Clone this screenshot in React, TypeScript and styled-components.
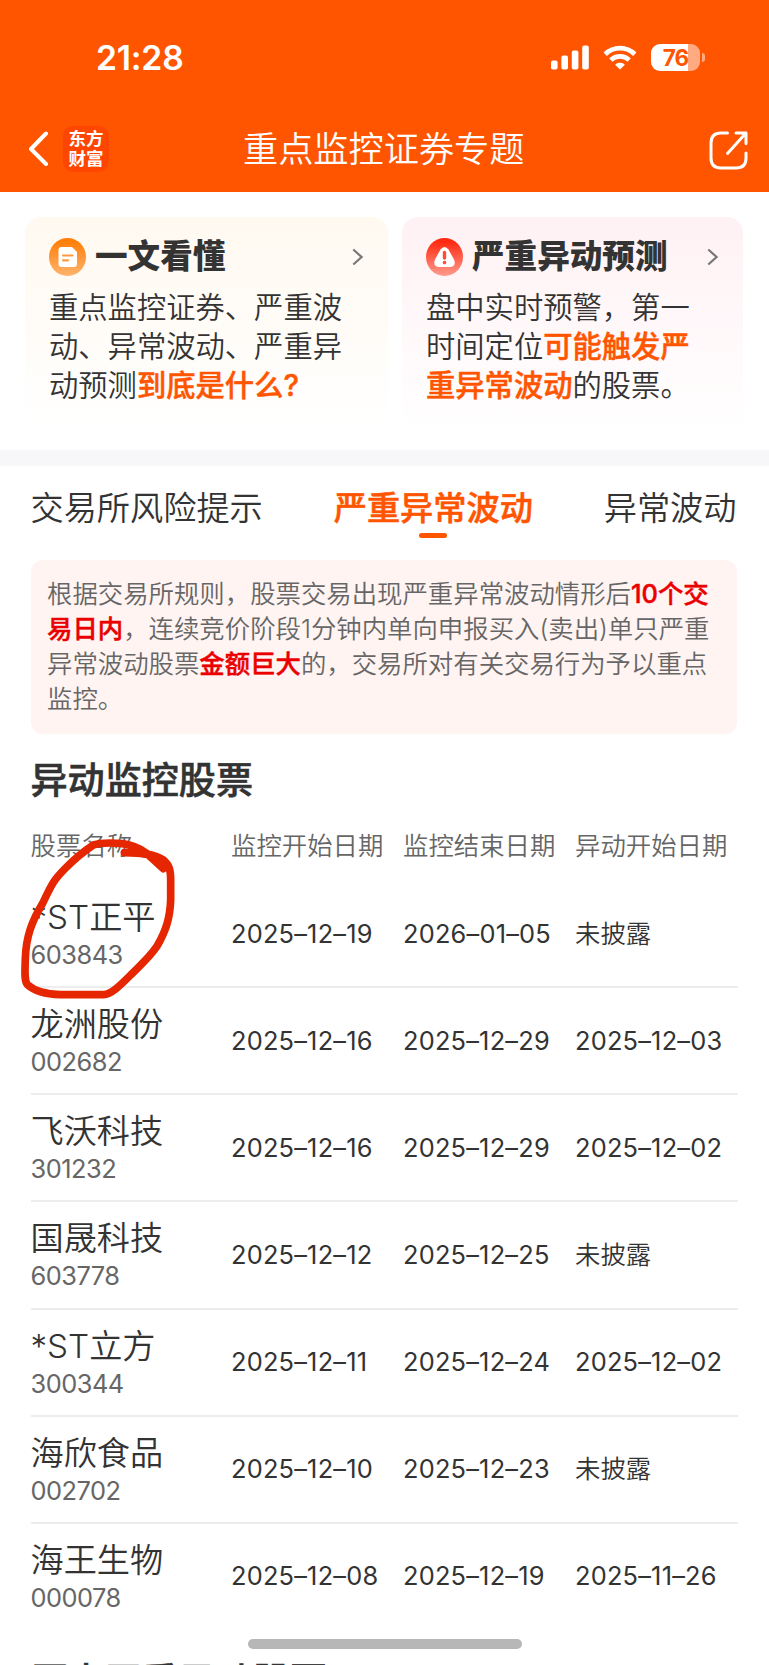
import React from "react";
import styled, { createGlobalStyle } from "styled-components";

const ORANGE = "#ff5500";
const INK = "#333333";
const GREY = "#666666";

const GlobalStyle = createGlobalStyle`
  * { box-sizing: border-box; }
  body {
    margin: 0;
    background: #fff;
    font-family: Inter, "Noto Sans CJK SC", sans-serif;
    font-weight: 350;
    color: ${INK};
  }
`;

const Page = styled.main`
  position: relative;
  width: 769px;
  height: 1665px;
  overflow: hidden;
  background: #fff;
`;

const Header = styled.header`
  height: 192px;
  background: ${ORANGE};
  color: #fff;
`;

const StatusBar = styled.div`
  display: flex;
  align-items: center;
  justify-content: space-between;
  height: 114px;
  padding: 0 64px 0 96px;
`;

const Clock = styled.span`
  padding-top: 1px;
  font-size: 33.7px;
  font-weight: 600;
  letter-spacing: -0.2px;
`;

const StatusIcons = styled.div`
  display: flex;
  align-items: center;
  gap: 14px;
`;

const Battery = styled.div`
  display: flex;
  align-items: center;
  gap: 2px;
`;

const BatteryBody = styled.div`
  width: 49px;
  height: 27px;
  border-radius: 9px;
  background: linear-gradient(90deg, #fff 76%, #ffaa80 76%);
  color: ${ORANGE};
  font-size: 22.5px;
  font-weight: 700;
  line-height: 28px;
  text-align: center;
  letter-spacing: -0.8px;
`;

const BatteryCap = styled.div`
  width: 3px;
  height: 9px;
  border-radius: 0 3px 3px 0;
  background: #ffaa80;
`;

const NavBar = styled.nav`
  display: grid;
  grid-template-columns: 215px auto 1fr;
  align-items: center;
  height: 70px;
  padding: 0 20px 0 28px;
`;

const NavLeft = styled.div`
  display: flex;
  align-items: center;
  gap: 13px;
`;

const Logo = styled.div`
  width: 46px;
  height: 46px;
  padding-top: 3px;
  border-radius: 10px;
  background: #ff4600;
  font-size: 17.5px;
  font-weight: 700;
  line-height: 19.5px;
  text-align: center;
`;

const Title = styled.h1`
  margin: 0;
  font-size: 35.2px;
  font-weight: 350;
  line-height: 48px;
`;

const NavRight = styled.div`
  display: flex;
  justify-content: flex-end;
  padding-top: 4px;
`;

const Cards = styled.section`
  display: flex;
  gap: 14px;
  height: 258px;
  padding: 25px 26px 19px 25px;
`;

const Card = styled.article<{ $tint: string; $width: number }>`
  width: ${(p) => p.$width}px;
  padding: 20px 24.5px 0 24px;
  border-radius: 16px;
  background: linear-gradient(180deg, ${(p) => p.$tint}, #fff);
`;

const CardHead = styled.div`
  display: flex;
  align-items: center;
  height: 40px;
`;

const CardTitle = styled.h2`
  flex: 1;
  margin: -2px 0 0 9px;
  font-size: 32.6px;
  font-weight: 900;
  line-height: 40px;
`;

const CardText = styled.p`
  margin: 11px 0 0;
  font-size: 29.3px;
  line-height: 39.1px;
  white-space: nowrap;
`;

const Accent = styled.strong<{ $color: string }>`
  color: ${(p) => p.$color};
  font-weight: 500;
  -webkit-text-stroke: 0.45px ${(p) => p.$color};
`;

const Band = styled.div`
  height: 16px;
  background: #f7f7f9;
`;

const Tabs = styled.div`
  display: flex;
  justify-content: space-between;
  height: 94px;
  padding: 18px 32.5px 0 30.5px;
`;

const Tab = styled.div<{ $active?: boolean }>`
  display: flex;
  flex-direction: column;
  align-items: center;
  gap: 1px;
  color: ${(p) => (p.$active ? ORANGE : INK)};
  font-size: 33.2px;
  font-weight: ${(p) => (p.$active ? 500 : 350)};
  line-height: 48px;
  -webkit-text-stroke: ${(p) => (p.$active ? `0.5px ${ORANGE}` : "0")};
`;

const TabLine = styled.i`
  width: 28px;
  height: 5px;
  border-radius: 3px;
  background: ${ORANGE};
`;

const Notice = styled.p`
  height: 174px;
  margin: 0 32px 0 31px;
  padding: 15.5px 16px;
  border-radius: 12px;
  background: #fff4f2;
  color: ${GREY};
  font-size: 25.4px;
  line-height: 35.1px;
  white-space: nowrap;
`;

const SectionTitle = styled.h2`
  margin: 20px 0 0 30.5px;
  font-size: 37.1px;
  font-weight: 500;
  line-height: 54px;
  -webkit-text-stroke: 0.6px ${INK};
`;

const Table = styled.section`
  margin: 19px 31px 0 30.5px;
`;

const gridColumns = "200.5px 172px 172px 1fr";

const HeadRow = styled.div`
  display: grid;
  grid-template-columns: ${gridColumns};
  height: 54px;
  color: ${GREY};
  font-size: 25.4px;
  line-height: 37px;
  white-space: nowrap;
`;

const Row = styled.div`
  display: grid;
  grid-template-columns: ${gridColumns};
  align-items: center;
  height: 107.15px;
  border-bottom: 2px solid #ededed;
  font-size: 25.4px;
  white-space: nowrap;
  &:last-child { border-bottom-color: transparent; }
`;

const DateCell = styled.span<{ $numeric: boolean }>`
  height: 36px;
  line-height: 36px;
  font-weight: ${(p) => (p.$numeric ? 400 : 350)};
  letter-spacing: ${(p) => (p.$numeric ? 0.2 : 0)}px;
`;

const StockName = styled.div`
  font-size: 33.2px;
  line-height: 42px;
`;

const StockCode = styled.div`
  color: ${GREY};
  font-size: 25.4px;
  font-weight: 400;
  line-height: 33px;
  letter-spacing: -0.5px;
`;

const NextTitle = styled(SectionTitle)`
  margin-top: 24px;
`;

const HomeBar = styled.div`
  position: absolute;
  left: 248px;
  top: 1639px;
  width: 274px;
  height: 10px;
  border-radius: 5px;
  background: #b7b7b7;
`;

const Scribble = styled.svg`
  position: absolute;
  left: 0;
  top: 740px;
`;

const SignalIcon = () => (
  <svg width="38" height="25" viewBox="0 0 38 25" fill="#fff">
    <rect x="0" y="15.5" width="6.6" height="9" rx="2" />
    <rect x="10.4" y="10.5" width="6.6" height="14" rx="2" />
    <rect x="20.8" y="5.5" width="6.6" height="19" rx="2" />
    <rect x="31.2" y="0.5" width="6.6" height="24" rx="2" />
  </svg>
);

const WifiIcon = () => (
  <svg width="34" height="25" viewBox="0 0 34 25" fill="none" stroke="#fff" strokeWidth="4.8">
    <path d="M2.2 9.2C10.6 1.1 23.4 1.1 31.8 9.2" />
    <path d="M7.8 15C13 10.2 21 10.2 26.2 15" />
    <path d="M12.1 19.7C15 17.2 19 17.2 21.9 19.7L17 24.6Z" fill="#fff" stroke="none" />
  </svg>
);

const BackIcon = () => (
  <svg width="22" height="36" viewBox="0 0 22 36" fill="none" stroke="#fff" strokeWidth="4" strokeLinecap="round" strokeLinejoin="round">
    <path d="M18 2.500L3 18L18 33" />
  </svg>
);

const ShareIcon = () => (
  <svg width="40" height="40" viewBox="0 0 40 40" fill="none" stroke="#fff" strokeWidth="3" strokeLinecap="round" strokeLinejoin="round">
    <path d="M18.5 2H12Q2 2 2 12V27Q2 37 12 37H27Q37 37 37 27V22" />
    <path d="M27 2H37V12.500M36.500 2.500L18.500 22.500" />
  </svg>
);

const ArrowIcon = () => (
  <svg width="12" height="18" viewBox="0 0 12 18" fill="none" stroke="#777" strokeWidth="2.2">
    <path d="M1.300 1.500L9.600 9L1.300 16.500" />
  </svg>
);

const DocIcon = () => (
  <svg width="37" height="38" viewBox="0 0 37 38">
    <defs>
      <linearGradient id="doc" x2="0" y2="1">
        <stop offset="0.1" stopColor="#ff7f0a" />
        <stop offset="1" stopColor="#ffb46e" />
      </linearGradient>
    </defs>
    <ellipse cx="18.5" cy="19" rx="18.5" ry="19" fill="url(#doc)" />
    <path d="M12.500 9H23L28 14V26Q28 29 25 29H12.500Q9.500 29 9.500 26V12Q9.500 9 12.500 9Z" fill="#fff" />
    <path d="M14 17.500H23.500M14 22.300H19" stroke="#ff9a3c" strokeWidth="2.200" strokeLinecap="round" />
  </svg>
);

const AlertIcon = () => (
  <svg width="37" height="38" viewBox="0 0 37 38">
    <defs>
      <linearGradient id="alert" x2="0" y2="1">
        <stop offset="0.1" stopColor="#ff2a12" />
        <stop offset="1" stopColor="#ff9c8e" />
      </linearGradient>
    </defs>
    <ellipse cx="18.5" cy="19" rx="18.5" ry="19" fill="url(#alert)" />
    <path d="M14.500 11.500Q18.500 6.500 22.500 11.500L28 21.500Q30.500 28.500 24.500 29H12.500Q6.500 28.500 9 21.500Z" fill="#fff" />
    <path d="M18.500 14.500V20" stroke="#ff4a35" strokeWidth="3.400" strokeLinecap="round" />
    <circle cx="18.500" cy="24.600" r="1.800" fill="#ff4a35" />
  </svg>
);

const rows = [
  ["*ST正平", "603843", "2025–12–19", "2026–01–05", "未披露"],
  ["龙洲股份", "002682", "2025–12–16", "2025–12–29", "2025–12–03"],
  ["飞沃科技", "301232", "2025–12–16", "2025–12–29", "2025–12–02"],
  ["国晟科技", "603778", "2025–12–12", "2025–12–25", "未披露"],
  ["*ST立方", "300344", "2025–12–11", "2025–12–24", "2025–12–02"],
  ["海欣食品", "002702", "2025–12–10", "2025–12–23", "未披露"],
  ["海王生物", "000078", "2025–12–08", "2025–12–19", "2025–11–26"],
];

export default function App() {
  return (
    <Page>
      <GlobalStyle />
      <Header>
        <StatusBar>
          <Clock>21:28</Clock>
          <StatusIcons>
            <SignalIcon />
            <WifiIcon />
            <Battery>
              <BatteryBody>76</BatteryBody>
              <BatteryCap />
            </Battery>
          </StatusIcons>
        </StatusBar>
        <NavBar>
          <NavLeft>
            <BackIcon />
            <Logo>东方<br />财富</Logo>
          </NavLeft>
          <Title>重点监控证券专题</Title>
          <NavRight><ShareIcon /></NavRight>
        </NavBar>
      </Header>

      <Cards>
        <Card $tint="#fff9f0" $width={363}>
          <CardHead>
            <DocIcon />
            <CardTitle>一文看懂</CardTitle>
            <ArrowIcon />
          </CardHead>
          <CardText>
            重点监控证券、严重波<br />
            动、异常波动、严重异<br />
            动预测<Accent $color={ORANGE}>到底是什么?</Accent>
          </CardText>
        </Card>
        <Card $tint="#fff1f4" $width={341}>
          <CardHead>
            <AlertIcon />
            <CardTitle>严重异动预测</CardTitle>
            <ArrowIcon />
          </CardHead>
          <CardText>
            盘中实时预警，第一<br />
            时间定位<Accent $color={ORANGE}>可能触发严<br />
            重异常波动</Accent>的股票。
          </CardText>
        </Card>
      </Cards>

      <Band />

      <Tabs>
        <Tab>交易所风险提示</Tab>
        <Tab $active>严重异常波动<TabLine /></Tab>
        <Tab>异常波动</Tab>
      </Tabs>

      <Notice>
        根据交易所规则，股票交易出现严重异常波动情形后<Accent $color="#ea0000">10个交<br />
        易日内</Accent>，连续竞价阶段1分钟内单向申报买入(卖出)单只严重<br />
        异常波动股票<Accent $color="#ea0000">金额巨大</Accent>的，交易所对有关交易行为予以重点<br />
        监控。
      </Notice>

      <SectionTitle>异动监控股票</SectionTitle>
      <Table>
        <HeadRow>
          <span>股票名称</span>
          <span>监控开始日期</span>
          <span>监控结束日期</span>
          <span>异动开始日期</span>
        </HeadRow>
        {rows.map(([name, code, ...dates]) => (
          <Row key={code}>
            <div>
              <StockName>{name}</StockName>
              <StockCode>{code}</StockCode>
            </div>
            {dates.map((date, i) => (
              <DateCell key={i} $numeric={date.startsWith("2")}>{date}</DateCell>
            ))}
          </Row>
        ))}
      </Table>
      <NextTitle>历史严重异动股票</NextTitle>

      <Scribble width="180" height="265" viewBox="0 0 540 795" fill="none" stroke="#e52600" strokeWidth="23" strokeLinecap="round" strokeLinejoin="round">
        <path d="M373 338C430 338 465 343 490 360C508 375 512 390 512 420V480C510 530 500 570 470 620C450 650 425 672 395 702C365 732 335 763 310 764H180C135 763 100 750 82 734C72 722 75 690 76 655C78 590 95 545 128 490C155 435 155 427 195 386C230 350 250 335 280 315C305 307 345 309 367 311C395 315 420 325 440 340L490 386" />
        <path d="M425 340C455 345 480 352 497 372" />
      </Scribble>
      <HomeBar />
    </Page>
  );
}
